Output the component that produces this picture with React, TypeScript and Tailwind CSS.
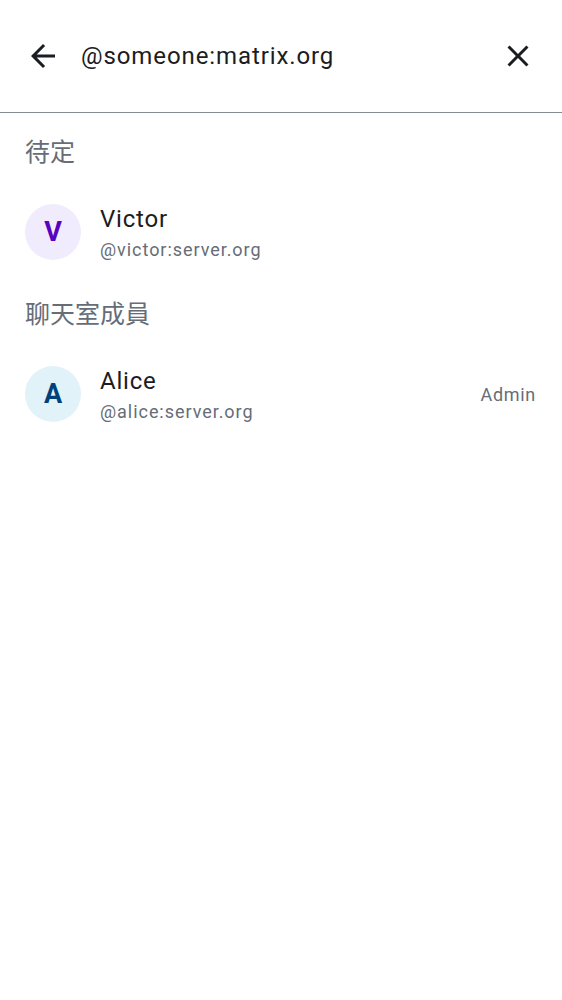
import React from "react";

const font = { fontFamily: "Roboto, 'Noto Sans CJK TC', sans-serif" };

function Row({ letter, name, id, bg, fg, role }: { letter: string; name: string; id: string; bg: string; fg: string; role?: string }) {
  return (
    <div className="flex items-center pl-[25px] pr-[26px] pt-[28px] pb-[27px]">
      <div className={`w-[56px] h-[56px] rounded-full flex items-center justify-center text-[27px] font-bold ${bg} ${fg}`}>
        {letter}
      </div>
      <div className="flex flex-col ml-[19px] flex-1 pt-[3px]">
        <div className="text-[24px] leading-[31px] tracking-[0.8px] text-[#1b1d22]">{name}</div>
        <div className="text-[18px] leading-[26px] mt-[2px] tracking-[0.95px] text-[#656d77]">{id}</div>
      </div>
      {role && <div className="text-[18px] tracking-[0.7px] text-[#656d77]">{role}</div>}
    </div>
  );
}

export default function App() {
  return (
    <div className="w-[562px] h-[1000px] bg-white" style={font}>
      <div className="h-[113px] flex items-center border-b border-[#858b92] pl-[25px] pr-[26px]">
        <svg width="36" height="36" viewBox="0 0 24 24" fill="#1b1d22">
          <path d="M20 11H7.83l5.59-5.59L12 4l-8 8 8 8 1.41-1.41L7.83 13H20v-2z" />
        </svg>
        <div className="ml-[20px] flex-1 text-[24px] tracking-[0.9px] text-[#1b1d22]">@someone:matrix.org</div>
        <svg width="36" height="36" viewBox="0 0 24 24" fill="#1b1d22">
          <path d="M19 6.41L17.59 5 12 10.59 6.41 5 5 6.41 10.59 12 5 17.59 6.41 19 12 13.41 17.59 19 19 17.59 13.41 12z" />
        </svg>
      </div>
      <div className="mt-[20px] h-[40px] leading-[40px] pl-[25px] text-[25px] text-[#656d77]">待定</div>
      <Row letter="V" name="Victor" id="@victor:server.org" bg="bg-[#f0ecfd]" fg="text-[#5a00c0]" />
      <div className="mt-[5px] h-[40px] leading-[40px] pl-[25px] text-[25px] text-[#656d77]">聊天室成員</div>
      <Row letter="A" name="Alice" id="@alice:server.org" bg="bg-[#e1f3f8]" fg="text-[#00417a]" role="Admin" />
    </div>
  );
}
